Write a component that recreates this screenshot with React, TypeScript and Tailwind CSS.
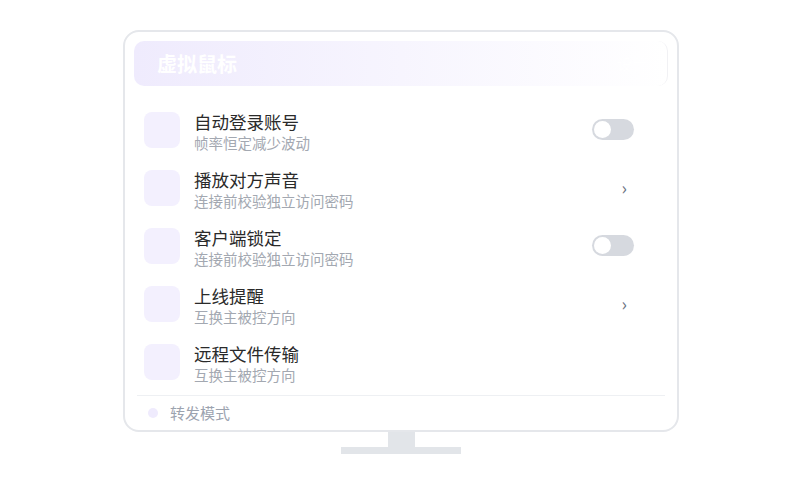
import React from "react";

const rows = [
  { title: "自动登录账号", sub: "帧率恒定减少波动", right: "toggle" },
  { title: "播放对方声音", sub: "连接前校验独立访问密码", right: "chevron" },
  { title: "客户端锁定", sub: "连接前校验独立访问密码", right: "toggle" },
  { title: "上线提醒", sub: "互换主被控方向", right: "chevron" },
  { title: "远程文件传输", sub: "互换主被控方向", right: "none" },
];

const font = { fontFamily: '"Noto Sans CJK SC", "Noto Sans", sans-serif' };

export default function App() {
  return (
    <div className="w-[800px] h-[500px] bg-white overflow-hidden" style={font}>
      <div className="ml-[123px] pt-[30px] w-[556px] flex flex-col items-center">
        <div className="w-[556px] h-[402px] border-2 border-[#e5e7eb] rounded-[16px] px-[9px] pt-[9px] flex flex-col">
          <div className="h-[45px] w-[534px] rounded-[10px] bg-gradient-to-r from-[#efebfd] to-[#ffffff] flex items-center justify-between pl-[23px] pr-[20px] border-r border-[#f1f1f4]">
            <span className="text-[20px] font-bold text-white leading-none">虚拟鼠标</span>
            <span className="text-[15px] text-white leading-none">设置</span>
          </div>
          <div className="pt-[15px] flex flex-col">
            {rows.map((r, i) => (
              <div key={i} className="h-[58px] flex items-center pl-[10px] pr-[34px]">
                <div className="w-[36px] h-[36px] rounded-[8px] bg-[#f3f0fe]" />
                <div className="ml-[14px] mt-[3px] flex-1 flex flex-col">
                  <span className="text-[17.5px] leading-[22px] text-[#2a2a2a]">{r.title}</span>
                  <span className="text-[14.5px] leading-[20px] text-[#a3a8b1]">{r.sub}</span>
                </div>
                {r.right === "toggle" && (
                  <div className="w-[42px] h-[21px] -mt-[1px] rounded-full bg-[#d6d9df] flex items-center px-[2px]">
                    <div className="w-[17px] h-[17px] rounded-full bg-white" />
                  </div>
                )}
                {r.right === "chevron" && (
                  <span className="mr-[7px] -mt-[2px] text-[18px] leading-none text-[#6b7280]">›</span>
                )}
              </div>
            ))}
          </div>
          <div className="mt-[4px] mx-[3px] h-px bg-[#eef0f3]" />
          <div className="flex items-center h-[33px] pl-[14px]">
            <div className="w-[10px] h-[10px] rounded-full bg-[#efebfd]" />
            <span className="ml-[12px] text-[15px] text-[#9ca3af] leading-none">转发模式</span>
          </div>
        </div>
        <div className="w-[27px] h-[15px] bg-[#e2e5e9]" />
        <div className="w-[120px] h-[7px] bg-[#e2e5e9]" />
      </div>
    </div>
  );
}
